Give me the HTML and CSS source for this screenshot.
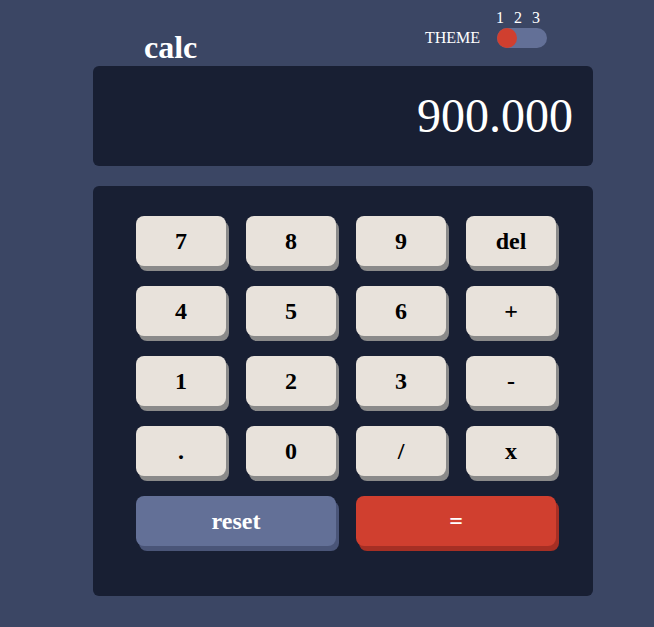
FILE: index.html
```html
<!DOCTYPE html>
<html lang="en">
<head>
<meta charset="utf-8">
<title>calc</title>
<link rel="stylesheet" href="styles.css">
</head>
<body>
<main class="calc">
  <header class="header">
    <h1 class="logo">calc</h1>
    <div class="theme">
      <span class="theme-label">THEME</span>
      <div class="theme-switch">
        <div class="theme-nums"><span>1</span><span>2</span><span>3</span></div>
        <div class="toggle"><span class="knob"></span></div>
      </div>
    </div>
  </header>
  <section class="screen">900.000</section>
  <section class="keypad">
    <button class="key">7</button>
    <button class="key">8</button>
    <button class="key">9</button>
    <button class="key">del</button>
    <button class="key">4</button>
    <button class="key">5</button>
    <button class="key">6</button>
    <button class="key">+</button>
    <button class="key">1</button>
    <button class="key">2</button>
    <button class="key">3</button>
    <button class="key">-</button>
    <button class="key">.</button>
    <button class="key">0</button>
    <button class="key">/</button>
    <button class="key">x</button>
    <button class="key key-wide key-reset">reset</button>
    <button class="key key-wide key-equal">=</button>
  </section>
</main>
</body>
</html>
```
FILE: styles.css
```css
* { box-sizing: border-box; }
html, body { margin: 0; padding: 0; }
body {
  background: #3b4664;
  font-family: "Liberation Serif", "Times New Roman", serif;
  color: #fff;
  min-height: 627px;
}
.calc {
  width: 500px;
  margin-left: 93px;
}
.header {
  height: 66px;
  display: flex;
  justify-content: space-between;
  align-items: flex-end;
  padding: 0 46px 0 51px;
}
.logo {
  margin: 0 0 3px 0;
  font-size: 32px;
  line-height: 32px;
  font-weight: bold;
}
.theme {
  display: flex;
  align-items: flex-end;
  margin-bottom: 18px;
}
.theme-label {
  font-size: 16px;
  line-height: 16px;
  margin: 0 17px 2px 0;
}
.theme-switch {
  display: flex;
  flex-direction: column;
  gap: 2px;
}
.theme-nums {
  display: flex;
  gap: 10px;
  font-size: 16px;
  line-height: 16px;
  margin-left: -1px;
}
.theme-nums span { width: 8px; }
.toggle {
  width: 50px;
  height: 20px;
  border-radius: 10px;
  background: #637097;
}
.knob {
  display: block;
  width: 20px;
  height: 20px;
  border-radius: 50%;
  background: #d03f2f;
}
.screen {
  height: 100px;
  border-radius: 6px;
  background: #181f33;
  display: flex;
  align-items: center;
  justify-content: flex-end;
  padding-right: 20px;
  font-size: 48px;
  line-height: 48px;
}
.keypad {
  margin-top: 20px;
  height: 410px;
  border-radius: 6px;
  background: #181f33;
  padding: 30px 37px 50px 43px;
  display: grid;
  grid-template-columns: repeat(4, 90px);
  grid-auto-rows: 50px;
  gap: 20px;
}
.key {
  border: none;
  border-radius: 8px;
  background: #e8e2db;
  box-shadow: 3px 5px 0 #8a8a8a;
  font-family: "Liberation Serif", "Times New Roman", serif;
  font-size: 24px;
  font-weight: bold;
  color: #000;
  padding: 0;
  cursor: pointer;
}
.key-wide { grid-column: span 2; }
.key-reset {
  background: #637097;
  box-shadow: 3px 5px 0 #4a5578;
  color: #fff;
}
.key-equal {
  background: #d03f2f;
  box-shadow: 3px 5px 0 #a62f24;
  color: #fff;
}
```
